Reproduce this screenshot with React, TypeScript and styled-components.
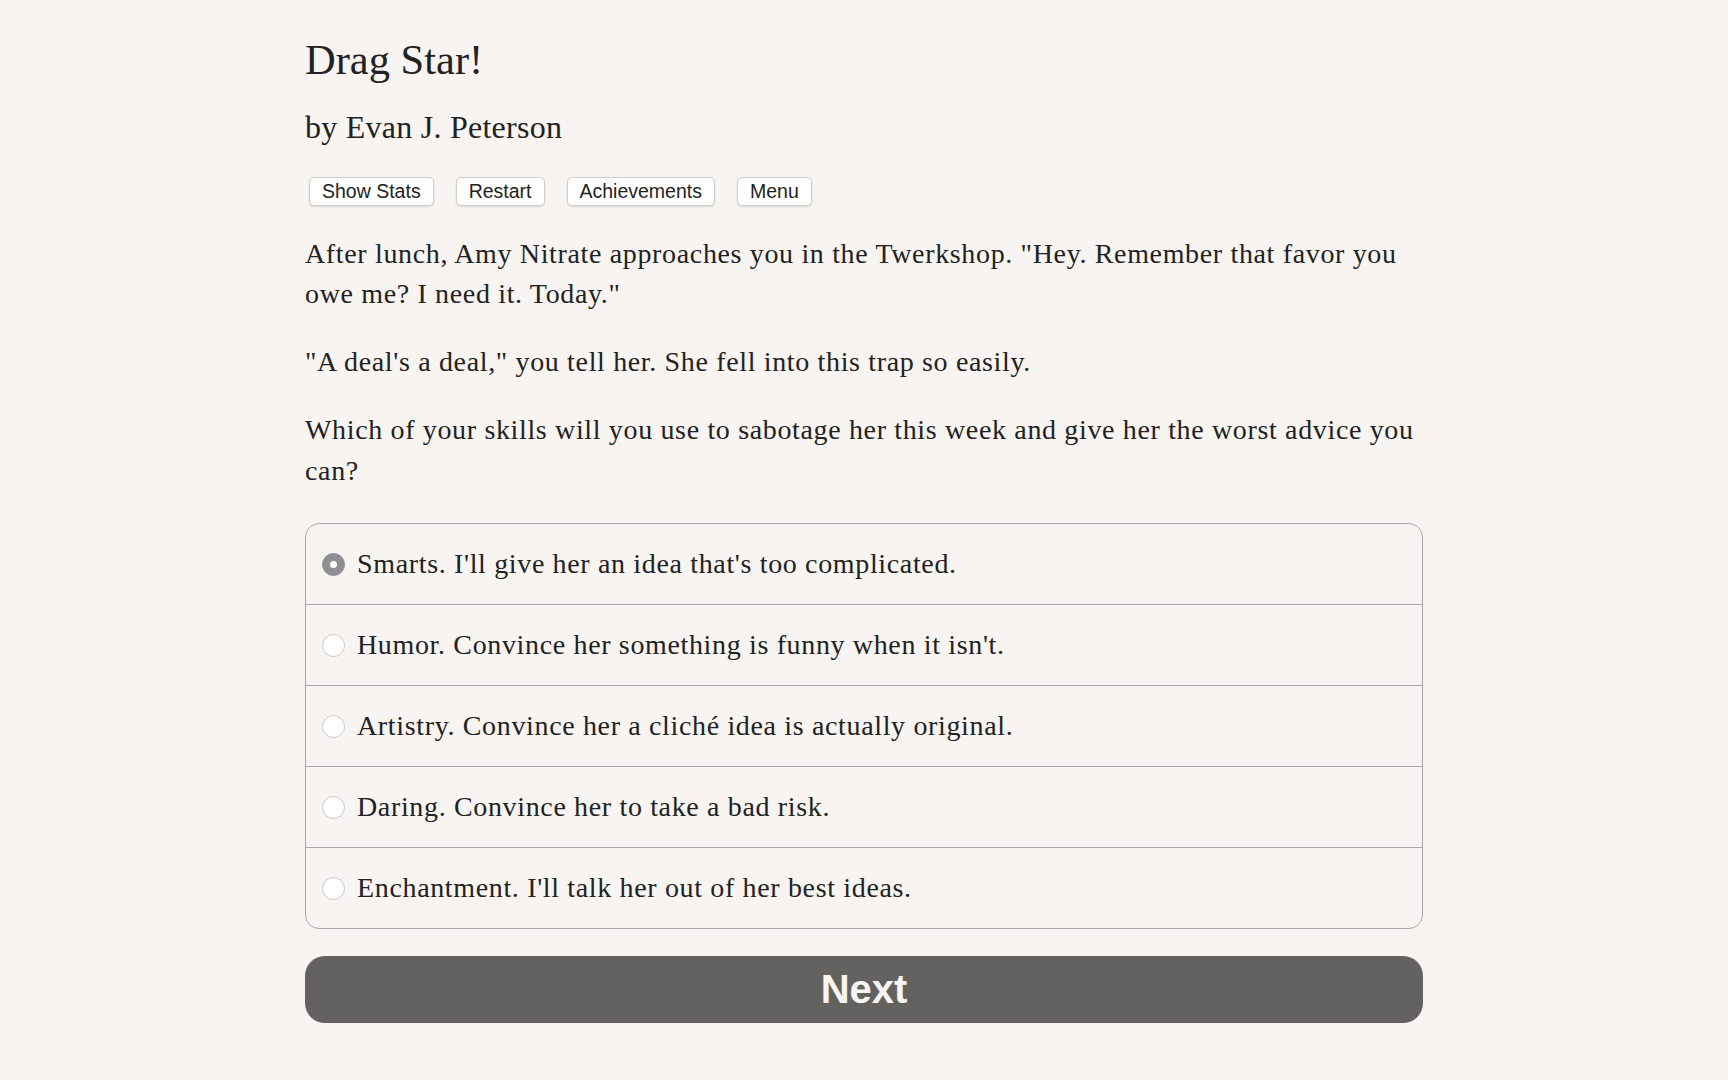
import React, { useState } from 'react';
import styled, { createGlobalStyle } from 'styled-components';

const GlobalStyle = createGlobalStyle`
  html, body {
    margin: 0;
    padding: 0;
    background: #f7f4f1;
  }
  body {
    color: #222;
    font-family: "Liberation Serif", "Times New Roman", serif;
  }
`;

const options = [
  "Smarts. I'll give her an idea that's too complicated.",
  "Humor. Convince her something is funny when it isn't.",
  'Artistry. Convince her a cliché idea is actually original.',
  'Daring. Convince her to take a bad risk.',
  "Enchantment. I'll talk her out of her best ideas.",
];

const App: React.FC = () => {
  const [selected, setSelected] = useState(0);

  return (
    <>
      <GlobalStyle />
      <Page>
        <Title>Drag Star!</Title>
        <Author>by Evan J. Peterson</Author>
        <Toolbar>
          <ToolButton>Show Stats</ToolButton>
          <ToolButton>Restart</ToolButton>
          <ToolButton>Achievements</ToolButton>
          <ToolButton>Menu</ToolButton>
        </Toolbar>
        <Paragraph>
          After lunch, Amy Nitrate approaches you in the Twerkshop. "Hey. Remember that favor you owe me? I need it. Today."
        </Paragraph>
        <Paragraph>"A deal's a deal," you tell her. She fell into this trap so easily.</Paragraph>
        <Paragraph>
          Which of your skills will you use to sabotage her this week and give her the worst advice you can?
        </Paragraph>
        <ChoiceList>
          {options.map((text, i) => (
            <ChoiceRow key={text} onClick={() => setSelected(i)}>
              <Radio $checked={selected === i} />
              <ChoiceText>{text}</ChoiceText>
            </ChoiceRow>
          ))}
        </ChoiceList>
        <NextButton>Next</NextButton>
      </Page>
    </>
  );
};

const Page = styled.main`
  width: 1118px;
  margin: 0 auto;
  padding-top: 34px;
`;

const Title = styled.h1`
  margin: 0;
  font-size: 42.5px;
  font-weight: normal;
  line-height: 51px;
`;

const Author = styled.h2`
  margin: 23px 0 0;
  font-size: 32px;
  font-weight: normal;
  letter-spacing: 0.25px;
  line-height: 38px;
`;

const Toolbar = styled.nav`
  display: flex;
  gap: 22px;
  margin-top: 31px;
  padding-left: 4px;
`;

const ToolButton = styled.button`
  height: 29px;
  padding: 0 12px;
  border: 1px solid #cfcdca;
  border-radius: 5px;
  background: #fff;
  box-shadow: 0 1px 2px rgba(0, 0, 0, 0.12);
  color: #222;
  font-family: "Liberation Sans", Arial, sans-serif;
  font-size: 19.5px;
  cursor: pointer;
`;

const Paragraph = styled.p`
  margin: 27.5px 0 0;
  font-size: 28px;
  letter-spacing: 0.65px;
  line-height: 40.5px;
`;

const ChoiceList = styled.div`
  margin-top: 32px;
  border: 1px solid #a9a9a9;
  border-radius: 14px;
  overflow: hidden;
`;

const ChoiceRow = styled.label`
  display: flex;
  align-items: center;
  gap: 12px;
  height: 80px;
  padding-left: 16px;
  cursor: pointer;

  & + & {
    border-top: 1px solid #a9a9a9;
  }
`;

const Radio = styled.span<{ $checked: boolean }>`
  box-sizing: border-box;
  width: 23px;
  height: 23px;
  border-radius: 50%;
  flex-shrink: 0;
  display: flex;
  align-items: center;
  justify-content: center;
  background: ${({ $checked }) => ($checked ? '#8f8e93' : '#fff')};
  border: 1px solid ${({ $checked }) => ($checked ? '#8f8e93' : '#c8c8c8')};

  &::after {
    content: '';
    display: ${({ $checked }) => ($checked ? 'block' : 'none')};
    width: 7px;
    height: 7px;
    border-radius: 50%;
    background: #fff;
  }
`;

const ChoiceText = styled.span`
  font-size: 28px;
  letter-spacing: 0.65px;
  line-height: 40px;
`;

const NextButton = styled.button`
  display: block;
  width: 100%;
  height: 67px;
  margin-top: 27px;
  border: none;
  border-radius: 20px;
  background: #636260;
  color: #f7f4f1;
  font-family: "Liberation Sans", Arial, sans-serif;
  font-size: 40px;
  font-weight: bold;
  cursor: pointer;
`;

export default App;
